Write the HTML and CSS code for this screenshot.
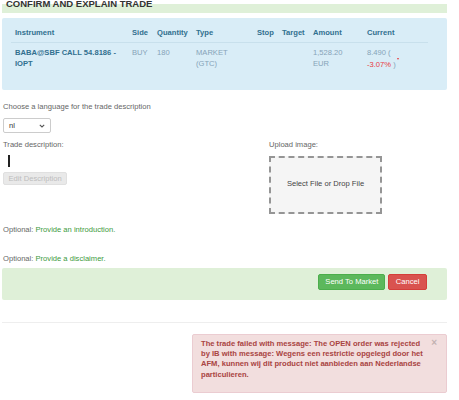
FILE: index.html
```html
<!DOCTYPE html>
<html lang="en">
<head>
<meta charset="utf-8">
<title>Confirm and explain trade</title>
<link rel="stylesheet" href="styles.css">
</head>
<body>
<div class="page">
  <div class="head"><h3 class="head-title">Confirm and explain trade</h3></div>

  <div class="panel-info">
    <table class="trade-table">
      <colgroup>
        <col class="c-instr"><col class="c-side"><col class="c-qty"><col class="c-type">
        <col class="c-stop"><col class="c-target"><col class="c-amount"><col class="c-current">
      </colgroup>
      <thead>
        <tr>
          <th>Instrument</th><th>Side</th><th>Quantity</th><th>Type</th>
          <th>Stop</th><th>Target</th><th>Amount</th><th>Current</th>
        </tr>
      </thead>
      <tbody>
        <tr>
          <td class="instr">BABA@SBF CALL 54.8186 - IOPT</td>
          <td>BUY</td>
          <td>180</td>
          <td>MARKET (GTC)</td>
          <td></td>
          <td></td>
          <td>1,528.20 EUR</td>
          <td>8.490 (<br><span class="neg">-3.07%</span> )<span class="down"></span></td>
        </tr>
      </tbody>
    </table>
  </div>

  <div class="form">
    <div class="lang-label">Choose a language for the trade description</div>
    <div class="select">
      <span>nl</span>
      <svg class="chev" width="6" height="4" viewBox="0 0 6 4"><path d="M0.8 0.8 L3 3 L5.2 0.8" fill="none" stroke="#555" stroke-width="1.1"/></svg>
    </div>

    <div class="desc-row">
      <div class="desc-col">
        <div class="label">Trade description:</div>
        <div class="editor"><span class="cursor"></span></div>
        <button class="btn-disabled" disabled>Edit Description</button>
      </div>
      <div class="upload-col">
        <div class="label">Upload image:</div>
        <div class="dropzone">Select File or Drop File</div>
      </div>
    </div>

    <p class="optional">Optional: <a class="opt-link">Provide an introduction.</a></p>
    <p class="optional second">Optional: <a class="opt-link">Provide a disclaimer.</a></p>

    <div class="actions">
      <button class="btn btn-send">Send To Market</button>
      <button class="btn btn-cancel">Cancel</button>
    </div>
  </div>

  <hr class="rule">

  <div class="alert-row">
    <div class="alert-danger">
      <span class="close">&times;</span>
      The trade failed with message: The OPEN order was rejected by IB with message: Wegens een restrictie opgelegd door het AFM, kunnen wij dit product niet aanbieden aan Nederlandse particulieren.
    </div>
  </div>
</div>
</body>
</html>
```

FILE: styles.css
```css
* { box-sizing: border-box; }

html, body {
  margin: 0;
  background: #fff;
}

body {
  font-family: "Liberation Sans", Arial, sans-serif;
  font-size: 7.6px;
  line-height: 11px;
  color: #666;
}

.page {
  padding: 0 12px 0 2px;
}

/* title strip */
.head {
  height: 13px;
  background: linear-gradient(to bottom, #fff 0, #fff 4px, #dff0d8 4px);
  padding-left: 4px;
}
.head-title {
  margin: 0;
  font-size: 9.5px;
  line-height: 8px;
  font-weight: bold;
  text-transform: uppercase;
  color: #333;
}

/* instrument summary */
.panel-info {
  margin-top: 5px;
  background: #d9edf7;
  border-radius: 2px;
  padding: 5px 19px 16px 9px;
}
.trade-table {
  width: 417px;
  table-layout: fixed;
  border-collapse: collapse;
}
.c-instr { width: 117px; }
.c-side { width: 25px; }
.c-qty { width: 39px; }
.c-type { width: 61px; }
.c-stop { width: 25px; }
.c-target { width: 31px; }
.c-amount { width: 54px; }
.c-current { width: 65px; }

.trade-table th,
.trade-table td {
  padding: 4px;
  text-align: left;
  vertical-align: top;
}
.trade-table th {
  color: #31708f;
  font-weight: bold;
  border-bottom: 1px solid #c8e0ec;
}
.trade-table td {
  color: #86a3b8;
}
.trade-table td.instr {
  color: #31708f;
  font-weight: bold;
}
.neg { color: #e8383d; }
.down {
  display: inline-block;
  width: 0;
  height: 0;
  margin-left: 1px;
  border-left: 1.5px solid transparent;
  border-right: 1.5px solid transparent;
  border-top: 2.5px solid #e8383d;
  vertical-align: 7px;
}

/* form area */
.form {
  padding-left: 1px;
}
.lang-label {
  margin-top: 10.5px;
}
.select {
  margin-top: 6.5px;
  width: 48px;
  height: 15px;
  border: 1px solid #ccc;
  border-radius: 2px;
  padding: 0 5px 0 5px;
  display: flex;
  align-items: center;
  justify-content: space-between;
  color: #333;
  background: #fff;
}

.desc-row {
  margin-top: 6px;
  display: grid;
  grid-template-columns: 266px 1fr;
}
.editor {
  padding: 5px 0 0 5px;
  height: 17px;
}
.cursor {
  display: block;
  width: 1.5px;
  height: 12px;
  background: #222;
}
.btn-disabled {
  display: block;
  margin-top: 5px;
  font: inherit;
  line-height: 11px;
  height: 13px;
  padding: 0 4.5px;
  border: 1px solid #e0e0e0;
  border-radius: 2px;
  background: #e9e9e9;
  color: #bdbdbd;
}

.dropzone {
  margin-top: 6px;
  width: 113px;
  height: 58px;
  border: 2px dashed #959595;
  background: #f5f5f5;
  color: #444;
  display: flex;
  align-items: center;
  justify-content: center;
  padding-bottom: 4px;
}

.optional {
  margin: 10px 0 0;
}
.optional.second {
  margin-top: 18px;
}
.opt-link {
  color: #3d9a3d;
}

.actions {
  margin-top: 3.5px;
  margin-left: -1px;
  height: 32px;
  background: #dff0d8;
  border-radius: 2px;
  padding: 6px 20px 0 0;
  display: flex;
  justify-content: flex-end;
  align-items: flex-start;
  gap: 3px;
}
.btn {
  font: inherit;
  line-height: 11px;
  height: 16px;
  padding: 0 6px;
  border-radius: 2px;
  color: #fff;
  border: 1px solid transparent;
}
.btn-send {
  background: #5cb85c;
  border-color: #4cae4c;
}
.btn-cancel {
  background: #d9534f;
  border-color: #d43f3a;
  padding: 0 6.5px;
}

.rule {
  margin: 22px 0 0;
  border: 0;
  border-top: 1px solid #eee;
}

.alert-row {
  margin-top: 11px;
  display: flex;
  justify-content: flex-end;
}
.alert-danger {
  position: relative;
  width: 255px;
  background: #f2dede;
  border: 1px solid #ebccd1;
  border-radius: 2px;
  color: #a94442;
  font-weight: bold;
  line-height: 10.4px;
  padding: 4px 22px 12px 8px;
}
.close {
  position: absolute;
  top: 3px;
  right: 9px;
  font-size: 10px;
  color: #000;
  opacity: 0.2;
}
```
